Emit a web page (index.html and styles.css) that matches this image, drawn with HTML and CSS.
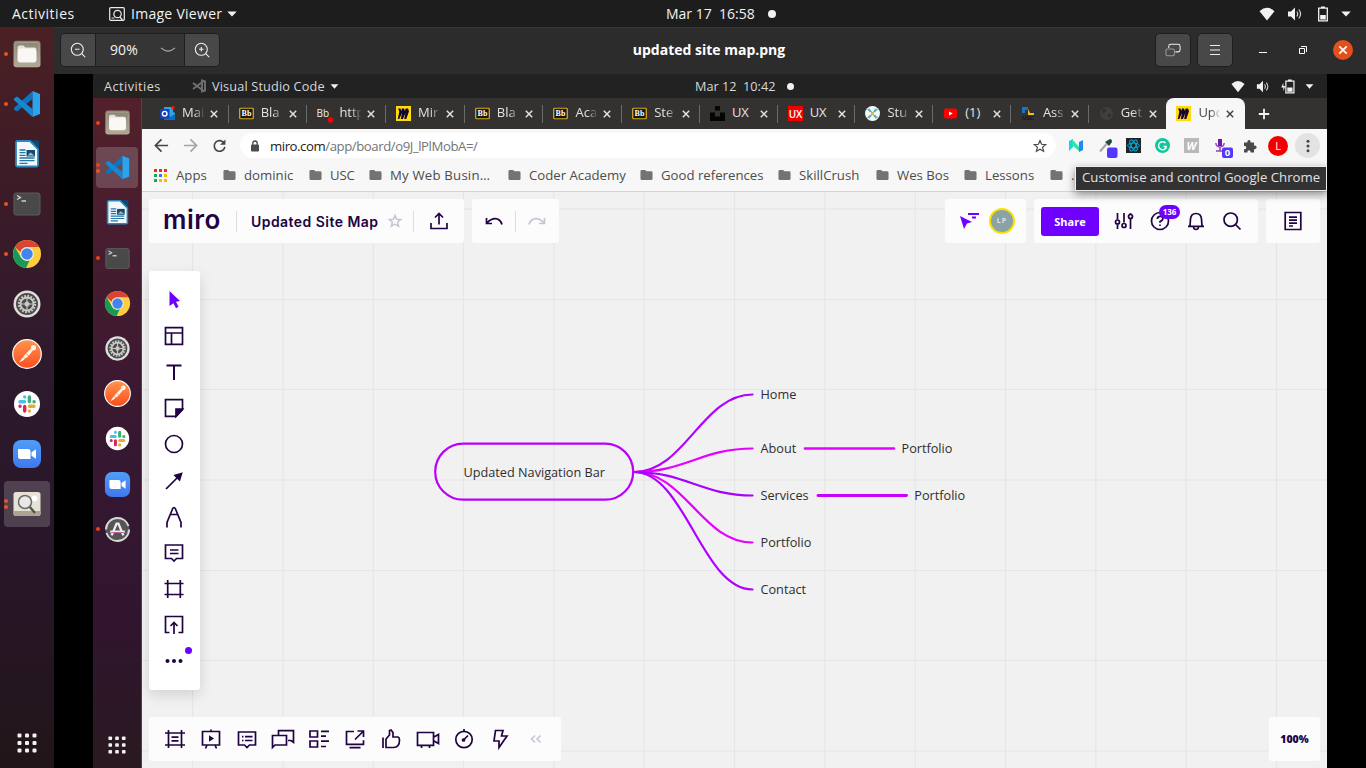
FILE: index.html
```html
<!DOCTYPE html>
<html lang="en">
<head>
<meta charset="utf-8">
<title>updated site map.png</title>
<link rel="stylesheet" href="styles.css">
</head>
<body>
<svg class="defs" aria-hidden="true">
  <defs>
    <linearGradient id="gFiles" x1="0" y1="0" x2="0" y2="1"><stop offset="0" stop-color="#8b8371"/><stop offset="1" stop-color="#b5ae9c"/></linearGradient>
    <linearGradient id="gPost" x1="0" y1="0" x2="0" y2="1"><stop offset="0" stop-color="#ff9650"/><stop offset="1" stop-color="#fb4c1c"/></linearGradient>
    <linearGradient id="gZoom" x1="0" y1="0" x2="0" y2="1"><stop offset="0" stop-color="#509df8"/><stop offset="1" stop-color="#3f78ee"/></linearGradient>
  </defs>
  <symbol id="files" viewBox="0 0 30 30"><rect x="1.5" y="1.8" width="27" height="26.5" rx="3" fill="url(#gFiles)"/><rect x="3" y="3.5" width="24" height="23" rx="2.5" fill="none" stroke="#a8a18f"/><path d="M5.500 11V8.500q0-2 2-2h4l2 2h9q2 0 2 2z" fill="#e6e2d7"/><rect x="5.500" y="9.500" width="19" height="14" rx="3" fill="#f9f8f5"/></symbol>
  <symbol id="code" viewBox="0 0 30 30"><path d="M20.500 2v8L5 22.500 2 20.500v-1.500z" fill="#0d74bd"/><path d="M20.500 28v-8L5 7.500 2 9.500V11z" fill="#1588d2"/><path d="M20.500 2 28 5v20l-7.500 3z" fill="#2ba4ef"/></symbol>
  <symbol id="writer" viewBox="0 0 30 30"><path d="M18 1.500h9v8z" fill="#0a4b74"/><path d="M5.500 2H18l8 8v16q0 1.500-1.500 1.500h-19Q4 27.500 4 26V3.500Q4 2 5.500 2z" fill="#f4f8fb" stroke="#2d87bd" stroke-width="1.800"/><path d="M7.500 11h6m-6 2.700h6m-6 2.600h6m-6 2.700h15m-15 2.700h15m-15 2.600h8" stroke="#2376a8" stroke-width="1.300"/><rect x="14.500" y="11" width="8.500" height="6.500" fill="#164c6d"/><path d="m15.500 16.500 3-3 4 3z" fill="#8fc3df"/></symbol>
  <symbol id="term" viewBox="0 0 30 30"><rect x="2" y="4" width="26" height="22" rx="2" fill="#494949" stroke="#5d5d5d"/><path d="m5 6.500 3.500 2-3.500 2" fill="none" stroke="#ddd" stroke-width="1.200"/><path d="M9.500 12h4.500" stroke="#eee" stroke-width="1.200"/></symbol>
  <symbol id="chrome" viewBox="0 0 30 30"><circle cx="15" cy="15" r="14" fill="#ffce3e"/><path d="M2.900 8A14 14 0 0 1 27.100 8H15a7 7 0 0 0-6.500 5z" fill="#d94435"/><path d="M2.900 8 9 18.500a7 7 0 0 0 8.500 3L14 29A14 14 0 0 1 2.900 8z" fill="#169a57"/><circle cx="15" cy="15" r="6.800" fill="#e8eef5"/><circle cx="15" cy="15" r="5.700" fill="#4385f0"/></symbol>
  <symbol id="gear" viewBox="0 0 30 30"><circle cx="15" cy="15" r="13.500" fill="#dededb"/><circle cx="15" cy="15" r="11" fill="#4b4b4b"/><circle cx="15" cy="15" r="7.700" fill="none" stroke="#c9c9c6" stroke-width="3" stroke-dasharray="1.700 1.330"/><circle cx="15" cy="15" r="6.500" fill="none" stroke="#c9c9c6" stroke-width="1.800"/><circle cx="15" cy="15" r="2.500" fill="#c9c9c6"/><path d="M15 9v12M9 15h12" stroke="#c9c9c6" stroke-width="1.200"/></symbol>
  <symbol id="postman" viewBox="0 0 30 30"><circle cx="15" cy="15" r="14.300" fill="url(#gPost)" stroke="#fff" stroke-width="1.200"/><path d="M7 23.500 9.500 20l3.500-4.500 6-6 2 2-5 6-5 4z" fill="#fff3e8"/><circle cx="21.500" cy="8.700" r="2.600" fill="#fff3e8"/><path d="m11 18 3 2m0-5 3 2" stroke="#f47d45" stroke-width=".700"/></symbol>
  <symbol id="slack" viewBox="0 0 30 30"><circle cx="15" cy="15" r="13" fill="#fff"/><g stroke-width="3.400" stroke-linecap="round"><path d="M8 12.700h4.500M12.700 8v.100" stroke="#4bbfe8"/><path d="M17.400 8v4.600M22 12.700h.100" stroke="#3aad7b"/><path d="M17.500 17.300H22M17.400 22v.100" stroke="#e5ae32"/><path d="M12.700 17.400V22M8 17.300h.100" stroke="#d9275e"/></g></symbol>
  <symbol id="zoomapp" viewBox="0 0 30 30"><rect x="1" y="1" width="28" height="28" rx="8" fill="url(#gZoom)"/><path d="M6 10h10q2.500 0 2.500 2.500V20h-10Q6 20 6 17.500zM19.500 13.300l4.500-3v9.400l-4.500-3z" fill="#fff"/></symbol>
  <symbol id="viewer" viewBox="0 0 30 30"><rect x="1.500" y="3" width="27" height="24" rx="2.500" fill="#e5e2d6"/><path d="M1.500 22h27v2.500q0 2.500-2.500 2.500H4q-2.500 0-2.500-2.500z" fill="#aaa491"/><circle cx="22.500" cy="9.500" r="3" fill="#fff"/><path d="m17 17 6 7" stroke="#55534d" stroke-width="2.400"/><circle cx="13" cy="13" r="6.500" fill="#e8e9e6" stroke="#6d6b64" stroke-width="1.500"/></symbol>
  <symbol id="updater" viewBox="0 0 30 30"><circle cx="15" cy="15" r="13.500" fill="#555"/><circle cx="15" cy="15" r="12.800" fill="none" stroke="#d8d8d6" stroke-width="2.200" stroke-dasharray="36 4"/><path d="M8.500 21.500 14 8.500h2l5.500 13M7 17.500h16" fill="none" stroke="#eee" stroke-width="2.600"/><path d="M8 18.300h14" stroke="#ba4f9d" stroke-width="1"/></symbol>
  <symbol id="grid9" viewBox="0 0 20 20"><g fill="#f2f2f2"><rect x=".500" y=".500" width="4" height="4" rx="1"/><rect x="8" y=".500" width="4" height="4" rx="1"/><rect x="15.500" y=".500" width="4" height="4" rx="1"/><rect x=".500" y="8" width="4" height="4" rx="1"/><rect x="8" y="8" width="4" height="4" rx="1"/><rect x="15.500" y="8" width="4" height="4" rx="1"/><rect x=".500" y="15.500" width="4" height="4" rx="1"/><rect x="8" y="15.500" width="4" height="4" rx="1"/><rect x="15.500" y="15.500" width="4" height="4" rx="1"/></g></symbol>
  <symbol id="wifi" viewBox="0 0 16 14"><path d="M.5 4.200Q8-2.500 15.500 4.200L8 13.500z" fill="#f2f2f2"/></symbol>
  <symbol id="sound" viewBox="0 0 16 14"><path d="M1 4.500h3l4-4v13l-4-4H1z" fill="#f2f2f2"/><path d="M9.800 4.500q1.800 2.500 0 5M11.800 2.500q3.500 4.500 0 9" fill="none" stroke="#d5d5d5" stroke-width="1.200"/></symbol>
  <symbol id="batt" viewBox="0 0 16 16"><path d="M3.700 2.200h8.600v12.600H3.700z" fill="none" stroke="#f2f2f2" stroke-width="1.300"/><path d="M6 .5h4v1.500H6zM5.200 9h5.600v4.500H5.200z" fill="#f2f2f2"/></symbol>
  <symbol id="caret" viewBox="0 0 10 6"><path d="M.3.400h9.400L5 5.600z" fill="#f2f2f2"/></symbol>
  <symbol id="bb" viewBox="0 0 15 12"><rect x=".7" y=".7" width="13.600" height="10.600" rx="1" fill="#171717" stroke="#d4aa15" stroke-width="1.300"/><text x="7.500" y="8.800" text-anchor="middle" class="bbtext">Bb</text></symbol>
  <symbol id="mirofav" viewBox="0 0 15 15"><path d="M0 0h15v15H0z" fill="#ffdb0b"/><path d="M2.200 2.500h2.200L5.500 5l.300-2.500H8L9 5l.600-2.500H12l1 2.800L10.300 13H8.200l1.300-6-2.600 6H4.800L6 7l-2.700 6H1.800L3.300 5.800z" fill="#150530"/></symbol>
  <symbol id="folder" viewBox="0 0 14 12"><path d="M.5 2Q.5.500 2 .500h3.500L7 2h5q1.500 0 1.500 1.500V10q0 1.500-1.500 1.500H2Q.500 11.500.500 10z" fill="#737373"/></symbol>
  <symbol id="x" viewBox="0 0 8 8"><path d="m.8.8 6.400 6.400m0-6.400L.8 7.200" fill="none" stroke="currentColor" stroke-width="1.500"/></symbol>
</svg>

<header class="topbar">
  <span class="tb-act">Activities</span>
  <svg class="tb-app" viewBox="0 0 16 14"><rect x=".7" y=".7" width="14.600" height="12.600" rx="1" fill="none" stroke="#ececec" stroke-width="1.200"/><circle cx="8.500" cy="7" r="3.700" fill="none" stroke="#ececec" stroke-width="1.200"/><path d="m11 10 2.500 3M2.500 11l3 0" stroke="#ececec" stroke-width="1.200"/></svg>
  <span class="tb-name">Image Viewer</span>
  <svg class="car"><use href="#caret"/></svg>
  <span class="tb-date">Mar 17&nbsp; 16:58</span><i class="dot"></i>
  <span class="tray"><svg class="t1"><use href="#wifi"/></svg><svg class="t1"><use href="#sound"/></svg><svg class="t2"><use href="#batt"/></svg><svg class="car"><use href="#caret"/></svg></span>
</header>

<div class="desk">
  <nav class="dock outer">
    <div class="di one"><svg><use href="#files"/></svg></div>
    <div class="di one"><svg><use href="#code"/></svg></div>
    <div class="di"><svg><use href="#writer"/></svg></div>
    <div class="di one"><svg><use href="#term"/></svg></div>
    <div class="di one"><svg><use href="#chrome"/></svg></div>
    <div class="di"><svg><use href="#gear"/></svg></div>
    <div class="di"><svg><use href="#postman"/></svg></div>
    <div class="di"><svg><use href="#slack"/></svg></div>
    <div class="di"><svg><use href="#zoomapp"/></svg></div>
    <div class="di two on"><svg><use href="#viewer"/></svg></div>
    <svg class="apps"><use href="#grid9"/></svg>
  </nav>

  <main class="win">
    <div class="titlebar">
      <div class="zoomset">
        <button class="hb"><svg viewBox="0 0 16 16"><circle cx="7.300" cy="7.300" r="6"/><path d="m11.700 11.700 3.500 3.500M5 7.300h4.600"/></svg></button>
        <span class="pct">90%</span><svg class="chev" viewBox="0 0 16 6"><path d="M1 .800q7 6.500 14 0" /></svg>
        <button class="hb"><svg viewBox="0 0 16 16"><circle cx="7.300" cy="7.300" r="6"/><path d="m11.700 11.700 3.500 3.500M5 7.300h4.600M7.300 5v4.600"/></svg></button>
      </div>
      <h1>updated site map.png</h1>
      <div class="wbtns">
        <button class="hb"><svg viewBox="0 0 17 14"><path d="M4 5V3q0-2 2-2h8q2 0 2 2v4q0 2-2 2h-3"/><rect x="1" y="6" width="9" height="7" rx="1.500" stroke="#999"/></svg></button>
        <button class="hb"><svg viewBox="0 0 16 16"><path d="M3 3.500h10M3 8h10M3 12.500h10"/></svg></button>
        <svg class="min" viewBox="0 0 8 10"><path d="M0 7.500h8"/></svg>
        <svg class="res" viewBox="0 0 8 8"><path d="M.5 2.500h5v5h-5z"/><path d="M2 .500h5.500V6" stroke="#aaa"/></svg>
        <svg class="cls" viewBox="0 0 20 20"><circle cx="10" cy="10" r="10"/><path d="m6.300 6.300 7.400 7.400m0-7.400-7.400 7.400"/></svg>
      </div>
    </div>

    <div class="stage">
      <div class="shot">
        <header class="topbar small">
          <span class="tb-act">Activities</span>
          <svg class="tb-app" viewBox="0 0 14 14"><path d="M1 4 11 11.500M1 10 11 2.500M10 1.500l3 1v9l-3 1z" fill="none" stroke="#707070" stroke-width="1.900"/></svg>
          <span class="tb-name">Visual Studio Code</span>
          <svg class="car"><use href="#caret"/></svg>
          <span class="tb-date">Mar 12&nbsp; 10:42</span><i class="dot"></i>
          <span class="tray"><svg class="t1"><use href="#wifi"/></svg><svg class="t1"><use href="#sound"/></svg><svg class="t2" viewBox="0 0 16 16"><use href="#batt" x="1.500" width="16" height="16"/><path d="M2.500 4 .3 9h2.200v4l2-5.500H2.500z" fill="#eee"/></svg><svg class="car"><use href="#caret"/></svg></span>
        </header>
        <div class="shotbody">
          <nav class="dock inner">
            <div class="di one"><svg><use href="#files"/></svg></div>
            <div class="di two on"><svg><use href="#code"/></svg></div>
            <div class="di"><svg><use href="#writer"/></svg></div>
            <div class="di one"><svg><use href="#term"/></svg></div>
            <div class="di"><svg><use href="#chrome"/></svg></div>
            <div class="di"><svg><use href="#gear"/></svg></div>
            <div class="di"><svg><use href="#postman"/></svg></div>
            <div class="di"><svg><use href="#slack"/></svg></div>
            <div class="di"><svg><use href="#zoomapp"/></svg></div>
            <div class="di one"><svg><use href="#updater"/></svg></div>
            <svg class="apps"><use href="#grid9"/></svg>
          </nav>

          <section class="browser">
            <div class="tabs">
              <div class="tab"><svg class="fav" viewBox="0 0 15 15"><path d="M4 1h9v5l2 1v7H4z" fill="#28a8ea"/><path d="M4 14V8l6 3 5-3v6z" fill="#0f6cc4"/><rect y="3" width="9.500" height="9.500" rx="1" fill="#1440b8"/><circle cx="4.700" cy="7.700" r="2.300" fill="none" stroke="#fff" stroke-width="1.400"/><circle cx="13" cy="1.800" r="1.700" fill="#f10"/></svg><span>Mai</span><svg class="tx"><use href="#x"/></svg></div>
              <div class="tab"><svg class="fav"><use href="#bb" y="1.500" width="15" height="12"/></svg><span>Bla</span><svg class="tx"><use href="#x"/></svg></div>
              <div class="tab"><svg class="fav" viewBox="0 0 15 15"><text x="-.5" y="11" class="bbplain">Bb</text><circle cx="13.500" cy="14" r="2.700" fill="#f00"/></svg><span>http</span><svg class="tx"><use href="#x"/></svg></div>
              <div class="tab"><svg class="fav"><use href="#mirofav"/></svg><span>Mir</span><svg class="tx"><use href="#x"/></svg></div>
              <div class="tab"><svg class="fav"><use href="#bb" y="1.500" width="15" height="12"/></svg><span>Bla</span><svg class="tx"><use href="#x"/></svg></div>
              <div class="tab"><svg class="fav"><use href="#bb" y="1.500" width="15" height="12"/></svg><span>Aca</span><svg class="tx"><use href="#x"/></svg></div>
              <div class="tab"><svg class="fav"><use href="#bb" y="1.500" width="15" height="12"/></svg><span>Ste</span><svg class="tx"><use href="#x"/></svg></div>
              <div class="tab"><svg class="fav" viewBox="0 0 15 15"><path d="M5 0h5v4.500H5zM0 6.500h5v4h5v-4h5V15H0z" fill="#050505"/></svg><span class="full">UX</span><svg class="tx"><use href="#x"/></svg></div>
              <div class="tab"><svg class="fav" viewBox="0 0 15 15"><path d="M0 0h15v15H0z" fill="#f20000"/><text x="7.500" y="11.500" text-anchor="middle" class="uxtext">UX</text></svg><span class="full">UX</span><svg class="tx"><use href="#x"/></svg></div>
              <div class="tab"><svg class="fav" viewBox="0 0 15 15"><circle cx="7.500" cy="7.500" r="7.500" fill="#f4fafa"/><path d="m2.500 3 3 3m7-3-3 3m-7 6 3-3m7 3-3-3M4 2.500l7 10M11 2.500l-7 10" stroke="#54b3b8" stroke-width="1.100"/><circle cx="7.500" cy="7.500" r="1.500" fill="#f0b23a"/></svg><span>Stu</span><svg class="tx"><use href="#x"/></svg></div>
              <div class="tab"><svg class="fav" viewBox="0 0 15 15"><rect x=".8" y="2.500" width="13.400" height="10" rx="2.500" fill="#f00"/><path d="m6 5.500 3.800 2L6 9.500z" fill="#fff"/></svg><span class="full">(1)</span><svg class="tx"><use href="#x"/></svg></div>
              <div class="tab"><svg class="fav" viewBox="0 0 15 15"><path d="M1 1h6v3H4v3H1z" fill="#1473cf"/><path d="M7 3v6h6V7H9z" fill="#f3bc1b"/><text x="7" y="14" text-anchor="middle" class="usctext">USC</text></svg><span>Ass</span><svg class="tx"><use href="#x"/></svg></div>
              <div class="tab last"><svg class="fav" viewBox="0 0 15 15"><circle cx="7.500" cy="7.500" r="6.500" fill="#3f3f3f"/><path d="M3 3q5-1 4 2L4 8M9 8q4-1 3 2l-3 2z" fill="#303030"/></svg><span>Get</span><svg class="tx"><use href="#x"/></svg></div>
              <div class="tab active"><svg class="fav"><use href="#mirofav"/></svg><span>Upd</span><svg class="tx"><use href="#x"/></svg></div>
              <svg class="plus" viewBox="0 0 12 12"><path d="M6 .800v10.400M.800 6h10.400" stroke="#f2f2f2" stroke-width="1.800"/></svg>
            </div>

            <div class="nav">
              <div class="navbtns">
                <svg viewBox="0 0 16 16"><path d="M15 8H2M8 1.500 1.500 8 8 14.500" stroke="#454545"/></svg>
                <svg viewBox="0 0 16 16"><path d="M1 8h13M8 1.500 14.500 8 8 14.500" stroke="#a5a5a5"/></svg>
                <svg viewBox="0 0 16 16"><path d="M13 5.500A5.700 5.700 0 1 0 13.700 9.500" stroke="#454545"/><path d="M14.300 1.500v5.700H8.600z" fill="#454545"/></svg>
              </div>
              <div class="url">
                <svg class="lock" viewBox="0 0 10 12"><rect x="1" y="4.500" width="8" height="7" rx="1" fill="#4b4b4b"/><path d="M2.800 5V3.200a2.200 2.200 0 0 1 4.400 0V5" fill="none" stroke="#4b4b4b" stroke-width="1.300"/></svg>
                <span><em>miro.com</em>/app/board/o9J_lPlMobA=/</span>
                <svg class="fstar" viewBox="0 0 14 14"><path d="m7 1.500 1.600 3.800 4.100.300-3.100 2.700 1 4L7 10.200l-3.600 2.100 1-4L1.300 5.600l4.100-.300z" fill="none" stroke="#4b4b4b" stroke-width="1.200"/></svg>
              </div>
              <div class="exts">
                <svg class="e1" viewBox="0 0 14 13"><path d="M0 2 4 0v8l-4 4z" fill="#18d6d8"/><path d="m3 0 8 9v4L3 6z" fill="#28e6ac"/><path d="m10 3 4-2v10l-4 2z" fill="#2387f5"/></svg>
                <svg class="e2" viewBox="0 0 20 20"><path d="M2 13.500 8.500 6" stroke="#a3a8a5" stroke-width="2"/><path d="m7 4 4 4 3-4q0-4-3-2.500z" fill="#1f4d39"/><rect x="9" y="9.500" width="10.500" height="10.500" rx="2" fill="#5237ff"/></svg>
                <svg class="e3" viewBox="0 0 15 15"><path d="M0 0h15v15H0z" fill="#20232a"/><g fill="none" stroke="#12a9cf"><ellipse cx="7.500" cy="7.500" rx="6" ry="2.400"/><ellipse cx="7.500" cy="7.500" rx="6" ry="2.400" transform="rotate(60 7.500 7.500)"/><ellipse cx="7.500" cy="7.500" rx="6" ry="2.400" transform="rotate(120 7.500 7.500)"/></g></svg>
                <svg class="e3" viewBox="0 0 15 15"><circle cx="7.500" cy="7.500" r="7.500" fill="#11c69b"/><path d="M10.500 5A4 4 0 1 0 11.500 8.500M8.500 8.500h3.300" fill="none" stroke="#fff" stroke-width="1.400"/></svg>
                <span class="e3 wbox">W</span>
                <svg class="e4" viewBox="0 0 20 20"><path d="M4 1h4v7H4z" fill="#7118ac"/><path d="M1.800 5q.5 4 4.200 4t4.200-4M2 13h7M6 9v4" fill="none" stroke="#8c42bb" stroke-width="1.500"/><rect x="8" y="9.500" width="11" height="10.500" rx="2" fill="#5237ff"/><text x="13.500" y="18.300" text-anchor="middle" class="zero">0</text></svg>
                <svg class="e5" viewBox="0 0 14 14"><path d="M1 3.500h3.500C3.500 0 8.500 0 7.500 3.500H11v3.200c3.500-.8 3.500 4.300 0 3.500v3.300H7.500C8 10.500 4 10.500 4.500 13.500H1v-3.300c3 .8 3-4 0-3.200z" fill="#4a4a4a"/></svg>
                <span class="prof">L</span>
                <span class="more"><svg viewBox="0 0 4 14"><g fill="#444"><circle cx="2" cy="2.200" r="1.500"/><circle cx="2" cy="7" r="1.500"/><circle cx="2" cy="11.800" r="1.500"/></g></svg></span>
              </div>
            </div>

            <div class="marks">
              <div class="bm m0"><svg viewBox="0 0 13 13"><path d="M0 0h3v3H0zM5 0h3v3H5zM10 0h3v3h-3z" fill="#ee2d1f"/><path d="M0 5h3v3H0zM0 10h3v3H0z" fill="#1ba94c"/><path d="M5 5h3v3H5z" fill="#2979ff"/><path d="M10 5h3v3h-3zM5 10h3v3H5zM10 10h3v3h-3z" fill="#f9b90c"/></svg>Apps</div>
              <div class="bm m1"><svg><use href="#folder"/></svg>dominic</div>
              <div class="bm m2"><svg><use href="#folder"/></svg>USC</div>
              <div class="bm m3"><svg><use href="#folder"/></svg>My Web Busin…</div>
              <div class="bm m4"><svg><use href="#folder"/></svg>Coder Academy</div>
              <div class="bm m5"><svg><use href="#folder"/></svg>Good references</div>
              <div class="bm m6"><svg><use href="#folder"/></svg>SkillCrush</div>
              <div class="bm m7"><svg><use href="#folder"/></svg>Wes Bos</div>
              <div class="bm m8"><svg><use href="#folder"/></svg>Lessons</div>
              <div class="bm m9"><svg><use href="#folder"/></svg>.</div>
              <div class="tip">Customise and control Google Chrome</div>
            </div>

            <div class="board">
              <svg class="canvas" viewBox="0 0 1185 576">
                <path d="M50.500 0v576M141 0v576M231.300 0v576M321.500 0v576M411.800 0v576M502.200 0v576M592.500 0v576M682.800 0v576M773.200 0v576M863.500 0v576M953.800 0v576M1044.200 0v576M1134.500 0v576M0 17.200h1185M0 107.500h1185M0 197.500h1185M0 288h1185M0 378.500h1185M0 468.500h1185M0 559h1185" stroke="#e6e6e6" stroke-width="1.200"/>
                <g fill="none" stroke-width="2.200" stroke-linecap="round">
                  <path d="M492 280C543 280 560 202.500 610.500 202.500" stroke="#b000ff"/>
                  <path d="M492 280C543 280 560 256.500 610.500 256.500" stroke="#e600ff"/>
                  <path d="M492 280C543 280 560 350.500 610.500 350.500" stroke="#e600ff"/>
                  <path d="M492 280C543 280 560 303.500 610.500 303.500" stroke="#a800ff"/>
                  <path d="M492 280C543 280 560 397.500 610.500 397.500" stroke="#b000ff"/>
                  <path d="M663 256.500h89" stroke="#e600ff" stroke-width="2.600"/>
                  <path d="M676 303.500h88.500" stroke="#c800ff" stroke-width="2.800"/>
                  <rect x="293.200" y="251.700" width="198" height="56" rx="28" stroke="#b900f8"/>
                </g>
                <g class="nodes">
                  <text x="321.500" y="285">Updated Navigation Bar</text>
                  <text x="618.500" y="207">Home</text>
                  <text x="618.500" y="261">About</text>
                  <text x="618.500" y="308">Services</text>
                  <text x="618.500" y="355">Portfolio</text>
                  <text x="618.500" y="402">Contact</text>
                  <text x="759.500" y="261">Portfolio</text>
                  <text x="772.300" y="308">Portfolio</text>
                </g>
              </svg>

              <div class="ui">
                <div class="brow">
                  <div class="card head">
                    <span class="logo">miro</span>
                    <span class="bname">Updated Site Map</span>
                    <svg class="bstar" viewBox="0 0 14 14"><path d="m7 1.500 1.600 3.800 4.100.300-3.100 2.700 1 4L7 10.200l-3.600 2.100 1-4L1.300 5.600l4.100-.300z"/></svg>
                    <span class="expo"><svg class="ic" viewBox="0 0 20 20"><path d="M2 12v5.500h16V12M10 13.500V3M6 6.500 10 2.500l4 4"/></svg></span>
                  </div>
                  <div class="card undo">
                    <span><svg class="ic" viewBox="0 0 20 20"><path d="M2.500 7v5.500h5.500M3 12Q8 6.500 13.500 8q3.500 1.500 4.500 5.500"/></svg></span>
                    <span class="redo"><svg class="ic" viewBox="0 0 20 20"><path d="M17.500 7v5.500H12M17 12Q12 6.500 6.500 8 3 9.500 2 13.500"/></svg></span>
                  </div>
                  <div class="card users">
                    <svg class="cur" viewBox="0 0 20 18"><path d="m1 4 12 6-5 1.500L5 17z" fill="#6f00ff"/><path d="M9 2h11M13 5.500h4" stroke="#6f00ff" stroke-width="1.800"/></svg>
                    <span class="ava">LP</span>
                  </div>
                  <div class="card acts">
                    <button class="share">Share</button>
                    <span><svg class="ic" viewBox="0 0 20 20"><path d="M3.500 2v6.500M3.500 13.500V18M10 2v9.500M16.500 2v1M16.500 8v10"/><circle cx="3.500" cy="11" r="2"/><circle cx="10" cy="14.500" r="2"/><circle cx="16.500" cy="5.500" r="2"/></svg></span>
                    <span class="help"><svg class="ic" viewBox="0 0 20 20"><circle cx="10" cy="10" r="8.500"/><path d="M7.300 8q.2-2.700 2.900-2.700T12.800 8q0 1.500-2.800 2.500v1.200M10 13.500v1.500"/></svg><i class="badge">136</i></span>
                    <span><svg class="ic" viewBox="0 0 20 20"><path d="M2 15.300h16M4 15 4.500 8q.5-5.500 5.500-5.500T15.500 8l.5 7M7.500 16q.3 2.500 2.500 2.500t2.500-2.500"/></svg></span>
                    <span><svg class="ic" viewBox="0 0 20 20"><circle cx="8.700" cy="8.700" r="6.700"/><path d="m13.500 13.500 5 5"/></svg></span>
                  </div>
                  <div class="card note"><svg class="ic" viewBox="0 0 20 20"><path d="M2.200 1.500h15.600v17H2.200zM6 6.200h8M6 9.200h8M6 12.200h8M6 15h4"/></svg></div>
                </div>

                <div class="tools">
                  <span><svg class="ic" viewBox="0 0 20 20"><path d="m5.500 1 10.500 10-4 .800 2.500 5-2.500 1.500-2.500-5L5.500 16z" fill="#6f00ff" stroke="none"/></svg></span>
                  <span><svg class="ic" viewBox="0 0 20 20"><path d="M1.500 1.700h17v16.600h-17zM1.500 7h17M7.500 7v11.300"/></svg></span>
                  <span><svg class="ic" viewBox="0 0 20 20"><path d="M2.500 3.500h15M10 3.500V18" stroke-width="2"/></svg></span>
                  <span><svg class="ic" viewBox="0 0 20 20"><path d="M1.500 1.700h17v10L12 18.300H1.500z"/><path d="M18.500 11H12v7.300z" fill="#210342"/></svg></span>
                  <span><svg class="ic" viewBox="0 0 20 20"><circle cx="10" cy="10" r="8.500"/></svg></span>
                  <span><svg class="ic" viewBox="0 0 20 20"><path d="M2 18 14 6"/><path d="m17.500 2.500-6.500 2 4.500 4.500z" fill="#210342"/></svg></span>
                  <span><svg class="ic tall" viewBox="0 0 20 22"><path d="M3 21.500v-5L8.500 3q1.500-3 3 0L17 16.500v5M6 8.500h8"/></svg></span>
                  <span><svg class="ic" viewBox="0 0 20 20"><path d="M1.500 2h17v13.500h-6L10 18l-2.500-2.500h-6zM6 7h8.500M6 10.500h8.500"/></svg></span>
                  <span><svg class="ic" viewBox="0 0 20 20"><path d="M.5 4.500h19M.5 15.500h19M3.700 1v18M16.300 1v18"/></svg></span>
                  <span><svg class="ic" viewBox="0 0 20 20"><path d="M5.500 17.500H1.500v-16h17v16h-4M10 19V8M6.500 11 10 7.500l3.500 3.500"/></svg></span>
                  <span><svg class="ic" viewBox="0 0 20 20"><g fill="#210342" stroke="none"><circle cx="3.500" cy="10" r="2"/><circle cx="10" cy="10" r="2"/><circle cx="16.500" cy="10" r="2"/></g></svg><i class="newdot"></i></span>
                </div>

                <div class="brow foot">
                  <div class="card panel">
                    <span><svg class="ic" viewBox="0 0 20 20"><path d="M0 4h20M0 16h20M3.500 1v18M16.500 1v18M6.500 8.200h7M6.500 11.800h7"/></svg></span>
                    <span><svg class="ic" viewBox="0 0 20 20"><path d="M1.500 2.500h17v13.500h-17zM10 .5v2M6 16l-1.500 3.500M14 16l1.500 3.500"/><path d="m8 6.200 5 3.300-5 3.300z" fill="#210342" stroke="none"/></svg></span>
                    <span><svg class="ic" viewBox="0 0 20 20"><path d="M1.500 3h17v13h-6L10 18.500 7.500 16h-6zM5 7.700h1.500M8 7.700h7.500M5 11.500h1.500M8 11.500h7.500"/></svg></span>
                    <span><svg class="ic big" viewBox="0 0 24 20"><path d="M7.500 6V1.700h15v11.600L20 11.500h-3M1.500 6.500h14v9.500H4l-2.500 2.500z"/></svg></span>
                    <span><svg class="ic" viewBox="0 0 20 20"><path d="M1 2h7.500v6H1zM1 12h7.500v6H1zM12 2.300h8M12 7.200h5M12 12.200h8M12 17.500h5"/></svg></span>
                    <span><svg class="ic" viewBox="0 0 20 20"><path d="M9 2.500H1.500v12.800h17v-4M4.500 18.700h11M10 10.500l8-8M12.500 2h6v6"/></svg></span>
                    <span><svg class="ic" viewBox="0 0 20 20"><path d="M2 8.500v10.500M5 18.500V10l3.500-4V1.500L10 1l2 2.500V8h5q1.500.5 1.500 3 0 7.500-6 7.500z"/></svg></span>
                    <span><svg class="ic big" viewBox="0 0 24 20"><path d="M1.500 3.500h16v12.800h-16zM17.500 8.200 22.500 5.500v9l-5-2.700M5.500 16.300V19M13.500 16.300V19"/></svg></span>
                    <span><svg class="ic" viewBox="0 0 20 20"><circle cx="10" cy="10.500" r="8.200"/><path d="M10 0v2.300M9.500 11l4.500-4.500"/><circle cx="9.500" cy="11" r="1"/></svg></span>
                    <span><svg class="ic" viewBox="0 0 20 20"><path d="M5.500 1.500H13L11.500 7H17L9 18.500V12H4z"/></svg></span>
                    <span class="fold"><svg class="ic" viewBox="0 0 20 20"><path d="m9 6.500-3.500 3.500L9 13.500M14.500 6.500 11 10l3.500 3.500"/></svg></span>
                  </div>
                  <div class="card hundred">100%</div>
                </div>
              </div>
            </div>
          </section>
        </div>
      </div>
    </div>
  </main>
</div>
</body>
</html>
```
FILE: styles.css
```css
* { box-sizing: border-box; }
body {
  margin: 0; width: 1366px; height: 768px; overflow: hidden; background: #000;
  font-family: "Open Sans", "Noto Sans", sans-serif; font-size: 14px; color: #f2f2f2;
  display: flex; flex-direction: column;
}
button { border: 0; padding: 0; margin: 0; font: inherit; color: inherit; }
svg { display: block; flex: none; overflow: visible; }
.defs { width: 0; height: 0; position: absolute; }
i, em { font-style: normal; }

/* system bars */
.topbar { height: 27px; flex: none; display: flex; align-items: center; background: #1d1d1d; padding: 0 15px 0 12px; white-space: nowrap; }
.tb-act { width: 97px; letter-spacing: .5px; }
.tb-app { width: 16px; height: 14px; }
.tb-name { width: 96px; margin-left: 6px; letter-spacing: .280px; }
.car { width: 10px; height: 6px; }
.tb-date { margin-left: 429px; width: 102px; }
.dot { width: 8px; height: 8px; border-radius: 50%; background: #f2f2f2; }
.tray { margin-left: auto; display: flex; align-items: center; gap: 12px; }
.tray .t1 { width: 16px; height: 14px; }
.tray .t2 { width: 16px; height: 16px; }
.tray .car { margin-left: -2px; }
.topbar.small { height: 24px; font-size: 12.700px; background: #222; color: #d8d8d8; padding: 0 13px 0 11px; }
.small .tb-act { width: 88px; letter-spacing: .450px; }
.small .tb-app { width: 14px; height: 14px; }
.small .tb-name { width: 118px; margin-left: 6px; letter-spacing: .160px; }
.small .car { width: 9px; height: 5px; }
.small .tb-date { margin-left: 356px; width: 92px; }
.small .dot { width: 7px; height: 7px; }
.small .tray { gap: 11px; }
.small .tray .t1 { width: 14px; height: 13px; }
.small .tray .t2 { width: 15px; height: 15px; }

.desk { flex: 1; display: flex; min-height: 0; }
.dock { position: relative; flex: none; display: flex; flex-direction: column; align-items: center; }
.outer { width: 54px; padding: 2px 0 15px; background: linear-gradient(#4a2024, #3c1b27 22%, #2e1a2d 45%, #281629 70%, #211519); }
.inner { width: 49px; padding: 2px 0 14px; border-right: 1px solid #55404f; background: linear-gradient(#53212a, #461c2f 22%, #351731 55%, #31152e 78%, #291921); }
.di { width: 46px; height: 50px; display: flex; align-items: center; justify-content: center; position: relative; }
.di svg { width: 30px; height: 30px; }
.inner .di { width: 42px; height: 45.200px; }
.inner .di svg { width: 27px; height: 27px; }
.on::after { content: ""; position: absolute; inset: 2px 0; border-radius: 4px; background: rgba(255,255,255,.18); }
.on svg { z-index: 1; }
.one::before, .two::before { content: ""; position: absolute; left: 0; top: calc(50% - 2px); width: 4px; height: 4px; border-radius: 50%; background: #e95420; z-index: 2; }
.two::before { top: calc(50% - 5px); box-shadow: 0 6px #e95420; }
.apps { width: 20px; height: 20px; margin-top: auto; }
.inner .apps { width: 18px; height: 18px; }
.inner .one::before, .inner .two::before { background: #f04010; }

/* image viewer window */
.win { flex: 1; display: flex; flex-direction: column; }
.titlebar { height: 47px; flex: none; background: #2c2c2c; border-top: 1px solid #373737; padding: 5px 13px 0 6px; display: grid; grid-template-columns: 160px 1fr 212px; }
.zoomset { display: flex; align-items: center; height: 34px; border: 1px solid #1e1e1e; border-radius: 5px; background: #353535; overflow: hidden; }
.hb { width: 35px; height: 32px; background: #484848; display: flex; align-items: center; justify-content: center; }
.hb svg { width: 16px; height: 16px; fill: none; stroke: #eee; stroke-width: 1.100; }
.zoomset .hb:first-child { border-right: 1px solid #1e1e1e; }
.zoomset .hb:last-child { border-left: 1px solid #1e1e1e; margin-left: auto; }
.pct { margin-left: 14px; width: 50px; line-height: 30px; padding-bottom: 1px; letter-spacing: .1px; }
.chev { width: 16px; height: 6px; fill: none; stroke: #aaa; stroke-width: 1.100; }
.titlebar h1 { margin: 0; font-size: 14px; font-weight: 700; text-align: center; line-height: 33px; padding-left: 57px; color: #fff; white-space: nowrap; }
.wbtns { display: flex; align-items: center; height: 34px; }
.wbtns .hb { height: 34px; width: 36px; border: 1px solid #1e1e1e; border-radius: 5px; margin-right: 6px; }
.wbtns .hb:first-child { margin-left: 14px; }
.min { width: 8px; height: 10px; margin-left: 20px; }
.res { width: 8px; height: 8px; margin-left: 32px; }
.min path, .res path { fill: none; stroke: #fff; }
.cls { width: 20px; height: 20px; margin-left: 26px; }
.cls circle { fill: #e2501e; }
.cls path { stroke: #fff; stroke-width: 1.700; }

.stage { flex: 1; background: #000; display: flex; padding: 0 39px; min-height: 0; }
.shot { flex: 1; display: flex; flex-direction: column; min-width: 0; }
.shotbody { flex: 1; display: flex; min-height: 0; }

/* browser */
.browser { flex: 1; display: flex; flex-direction: column; min-width: 0; font-size: 13.200px; }
.tabs { height: 31px; flex: none; background: #333231; display: flex; align-items: center; padding-left: 8px; }
.tab { width: 78.700px; height: 31px; flex: none; display: flex; align-items: center; padding-left: 10px; position: relative; color: #e2e2e2; font-size: 13px; }
.tab:nth-child(n+7) { width: 77.750px; }
.tab::after { content: ""; position: absolute; right: 0; top: 7px; width: 1px; height: 18px; background: #6b6b6b; }
.tab.last::after, .tab.active::after { display: none; }
.fav { width: 15px; height: 15px; }
.tab span { width: 22px; margin-left: 7px; white-space: nowrap; line-height: 29px; padding-bottom: 2px; -webkit-mask-image: linear-gradient(90deg, #000 55%, transparent 105%); mask-image: linear-gradient(90deg, #000 55%, transparent 105%); }
.tab span.full { -webkit-mask-image: none; mask-image: none; }
.tx { width: 8px; height: 8px; margin-left: 6px; }
.tab.active { background: #f7f7f7; color: #444; border-radius: 8px 8px 0 0; width: 79px; }
.plus { width: 12px; height: 12px; margin-left: 13px; }
.bbtext { font: 700 8px "Liberation Serif", serif; fill: #fff; }
.bbplain { font: 500 10px "Open Sans", sans-serif; fill: #eee; }
.uxtext { font: 600 10px "Open Sans", sans-serif; fill: #fff; }
.usctext { font: 700 6px "Open Sans", sans-serif; fill: #171717; }

.nav { height: 33px; flex: none; background: #f7f7f7; display: flex; align-items: center; padding-right: 7px; }
.navbtns { width: 98px; display: flex; gap: 14px; padding-left: 12px; }
.navbtns svg { width: 15px; height: 15px; fill: none; stroke-width: 1.800; }
.url { width: 816px; height: 25px; border-radius: 13px; background: #fff; display: flex; align-items: center; color: #757575; }
.lock { width: 10px; height: 12px; margin: 0 10px; }
.url em { color: #222; }
.url span { width: 763px; letter-spacing: -.440px; }
.fstar { width: 14px; height: 14px; }
.exts { flex: 1; display: flex; align-items: center; padding-left: 13px; }
.e1 { width: 14px; height: 13px; }
.e2 { width: 20px; height: 20px; margin: 4px 8px 0 15px; }
.e3 { width: 15px; height: 15px; margin-right: 14px; }
.wbox { background: #b9b9b9; color: #fff; font: italic 700 11px/15px "Open Sans", sans-serif; text-align: center; margin-right: 15px; }
.e4 { width: 20px; height: 20px; margin: 4px 9px 0 0; }
.e5 { width: 14px; height: 14px; margin-right: 11px; }
.zero { font: 700 9.500px "Open Sans", sans-serif; fill: #fff; }
.prof { width: 20px; height: 20px; flex: none; border-radius: 50%; background: #f20000; font-size: 11px; line-height: 20px; text-align: center; color: #fff; margin-right: 7px; }
.more { width: 25px; height: 25px; flex: none; border-radius: 50%; background: #e3e3e3; display: flex; align-items: center; justify-content: center; }
.more svg { width: 4px; height: 14px; }

.marks { height: 30px; flex: none; background: #f7f7f7; border-bottom: 1px solid #d4d4d4; display: flex; align-items: center; padding: 0 0 3px 12px; position: relative; color: #4c4c4c; white-space: nowrap; }
.bm { display: flex; align-items: center; gap: 8px; flex: none; }
.bm svg { width: 13px; height: 12px; }
.m0 svg { width: 13px; height: 13px; margin-right: 1px; }
.m0 { width: 69px; } .m1 { width: 86px; } .m2 { width: 60px; } .m3 { width: 139px; letter-spacing: .200px; } .m4 { width: 132px; }
.m5 { width: 138px; } .m6 { width: 98px; } .m7 { width: 88px; } .m8 { width: 86px; }
.m2 { letter-spacing: -.2px; }
.tip { position: absolute; left: 933px; top: 4px; width: 252px; height: 25px; border: 1px solid #eee; background: #323232; color: #e2e2e2; font-size: 13.200px; line-height: 21px; padding-left: 6px; box-shadow: 0 3px 8px rgba(0,0,0,.45); z-index: 5; }

/* board */
.board { flex: 1; position: relative; background: #f1f1f1; min-height: 0; overflow: hidden; }
.canvas { position: absolute; left: 0; top: 0; width: 1185px; height: 576px; }
.nodes text { font: 12.700px "Open Sans", "Noto Sans", sans-serif; fill: #2e2e2e; }
.ui { position: relative; height: 576px; padding: 7px 7px 7px; display: flex; flex-direction: column; }
.brow { display: flex; height: 44px; flex: none; }
.card { background: #fcfcfc; border-radius: 3px; display: flex; align-items: center; color: #210342; }
.ic { width: 20px; height: 20px; fill: none; stroke: #210342; stroke-width: 1.700; }
.ic.big { width: 24px; }
.ic.tall { height: 22px; }
.head { width: 315px; margin-right: 8px; }
.logo { width: 88px; height: 21px; padding-left: 14px; border-right: 1px solid #dfdce5; font: 600 26px/18px Inter, sans-serif; letter-spacing: .500px; }
.bname { width: 151px; padding-left: 14px; font: 600 14px Inter, sans-serif; letter-spacing: .45px; white-space: nowrap; }
.bstar { width: 14px; height: 14px; }
.bstar path { fill: none; stroke: #c9c4d3; stroke-width: 1.500; }
.expo { margin-left: 11px; height: 21px; width: 50px; border-left: 1px solid #dfdce5; display: flex; align-items: center; justify-content: center; }
.undo { width: 87px; margin-right: auto; }
.undo span { width: 43px; height: 21px; display: flex; justify-content: center; }
.undo .redo { border-left: 1px solid #dfdce5; }
.redo .ic, .fold .ic { stroke: #cac5d4; }
.users { width: 81px; margin-right: 8px; padding-left: 14px; }
.cur { width: 20px; height: 18px; }
.ava { width: 26px; height: 26px; margin-left: 10px; border: 2px solid #fae100; border-radius: 50%; background: #8aa3a5; font-size: 7px; font-weight: 700; line-height: 22px; text-align: center; letter-spacing: 1px; color: #dbe5e5; }
.acts { width: 224px; margin-right: 8px; padding-left: 7px; }
.share { width: 58px; height: 29px; border-radius: 3px; background: #6f00ff; color: #fff; font-size: 11px; font-weight: 700; margin-right: 7px; }
.acts span { width: 36px; height: 36px; display: flex; align-items: center; justify-content: center; position: relative; }
.badge { position: absolute; left: 17px; top: 2px; width: 21px; height: 14px; border-radius: 7px; background: #6f00ff; color: #fff; font: 700 8px/14px "Open Sans", sans-serif; text-align: center; }
.note { width: 54px; justify-content: center; }
.tools { margin-top: 28px; width: 51px; height: 419px; flex: none; border-radius: 3px; background: #fff; padding: 11px 1px 0 0; box-shadow: 0 5px 14px rgba(0,0,0,.13); }
.tools span { height: 36.100px; display: flex; align-items: center; justify-content: center; position: relative; }
.newdot { position: absolute; left: 36px; top: 4px; width: 7px; height: 7px; border-radius: 50%; background: #6f00ff; }
.foot { margin-top: auto; justify-content: space-between; }
.panel { width: 412px; padding-left: 7.500px; }
.panel span { width: 36.150px; display: flex; justify-content: center; }
.hundred { width: 51px; justify-content: center; font-size: 10.500px; font-weight: 800; }
```
